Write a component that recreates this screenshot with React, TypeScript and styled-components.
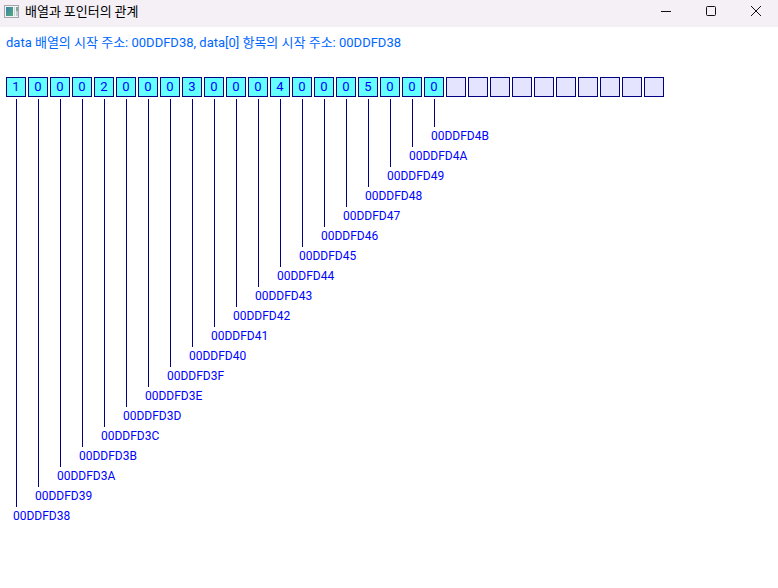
import React from 'react';
import styled, { createGlobalStyle } from 'styled-components';

const GlobalStyle = createGlobalStyle`
  * { box-sizing: border-box; }
  html, body { margin: 0; background: #ffffff; }
`;

const Window = styled.div`
  min-height: 100vh;
  background: #ffffff;
  overflow: hidden;
  font-family: Roboto, "Noto Sans CJK KR", sans-serif;
  font-size: 12px;
`;

const TitleBar = styled.header`
  display: flex;
  align-items: center;
  justify-content: space-between;
  height: 27px;
  padding: 0 0 5px 4px;
  background: #f4f0f6;
`;

const TitleGroup = styled.div`
  display: flex;
  align-items: center;
  gap: 6px;
`;

const Title = styled.h1`
  margin: 0;
  font: 400 13px/20px "Noto Sans CJK KR", sans-serif;
  color: #000000;
`;

const WindowControls = styled.div`
  display: flex;
`;

const ControlButton = styled.button`
  display: grid;
  place-items: center;
  width: 45px;
  height: 22px;
  padding: 0;
  border: 0;
  background: transparent;
  color: #111111;
`;

const Content = styled.main`
  padding: 6px;
`;

const Summary = styled.p`
  margin: 0 0 24px;
  font-size: 13px;
  line-height: 20px;
  white-space: nowrap;
  color: #0066ff;
`;

const Memory = styled.div`
  display: flex;
  align-items: flex-start;
  gap: 2px;
`;

const ByteColumn = styled.div`
  flex: none;
  width: 20px;
`;

const ByteCell = styled.div<{ $used: boolean }>`
  height: 20px;
  border: 1px solid #000080;
  background: ${({ $used }) => ($used ? '#64ffff' : '#e4e4ff')};
  font-size: 13px;
  line-height: 18px;
  text-align: center;
  color: #0000ff;
`;

const Pointer = styled.div<{ $level: number }>`
  width: 1px;
  height: ${({ $level }) => 28 + $level * 20}px;
  margin: 2px 0 0 10px;
  background: #000080;
`;

const Address = styled.div`
  margin-left: 7px;
  line-height: 18px;
  white-space: nowrap;
  color: #0000ff;
`;

const TOTAL_CELLS = 30;
const BASE_ADDRESS = 0x00ddfd38;
const bytes = [1, 2, 3, 4, 5].flatMap((n) => [n, 0, 0, 0]);

const formatAddress = (value: number) =>
  value.toString(16).toUpperCase().padStart(8, '0');

const AppIcon = () => (
  <svg width="15" height="13" viewBox="0 0 15 13" aria-hidden="true">
    <defs>
      <linearGradient id="pane" x1="0" y1="0" x2="1" y2="1">
        <stop offset="0" stopColor="#3c80a8" />
        <stop offset="1" stopColor="#4fae7c" />
      </linearGradient>
    </defs>
    <rect x="0.5" y="0.5" width="14" height="12" fill="#f4f4f4" stroke="#a4a6ac" />
    <rect x="2" y="2" width="7" height="9" fill="url(#pane)" />
    <rect x="10" y="2" width="1" height="9" fill="#c9d3dc" />
    <rect x="12" y="2" width="2" height="4" fill="#7fa894" />
    <rect x="12" y="6" width="2" height="5" fill="#c4ccd0" />
  </svg>
);

export default function App() {
  const base = formatAddress(BASE_ADDRESS);
  return (
    <>
      <GlobalStyle />
      <Window>
        <TitleBar>
          <TitleGroup>
            <AppIcon />
            <Title>배열과 포인터의 관계</Title>
          </TitleGroup>
          <WindowControls>
            <ControlButton type="button" aria-label="최소화">
              <svg width="10" height="10" viewBox="0 0 10 10">
                <path d="M0 5.5H10" stroke="currentColor" />
              </svg>
            </ControlButton>
            <ControlButton type="button" aria-label="최대화">
              <svg width="10" height="10" viewBox="0 0 10 10">
                <rect x="0.5" y="0.5" width="9" height="9" rx="1" fill="none" stroke="currentColor" />
              </svg>
            </ControlButton>
            <ControlButton type="button" aria-label="닫기">
              <svg width="10" height="10" viewBox="0 0 10 10">
                <path d="M0 0L10 10M10 0L0 10" stroke="currentColor" />
              </svg>
            </ControlButton>
          </WindowControls>
        </TitleBar>
        <Content>
          <Summary>
            data 배열의 시작 주소: {base}, data[0] 항목의 시작 주소: {base}
          </Summary>
          <Memory>
            {Array.from({ length: TOTAL_CELLS }, (_, i) => (
              <ByteColumn key={i}>
                <ByteCell $used={i < bytes.length}>{bytes[i]}</ByteCell>
                {i < bytes.length && (
                  <>
                    <Pointer $level={bytes.length - 1 - i} />
                    <Address>{formatAddress(BASE_ADDRESS + i)}</Address>
                  </>
                )}
              </ByteColumn>
            ))}
          </Memory>
        </Content>
      </Window>
    </>
  );
}
